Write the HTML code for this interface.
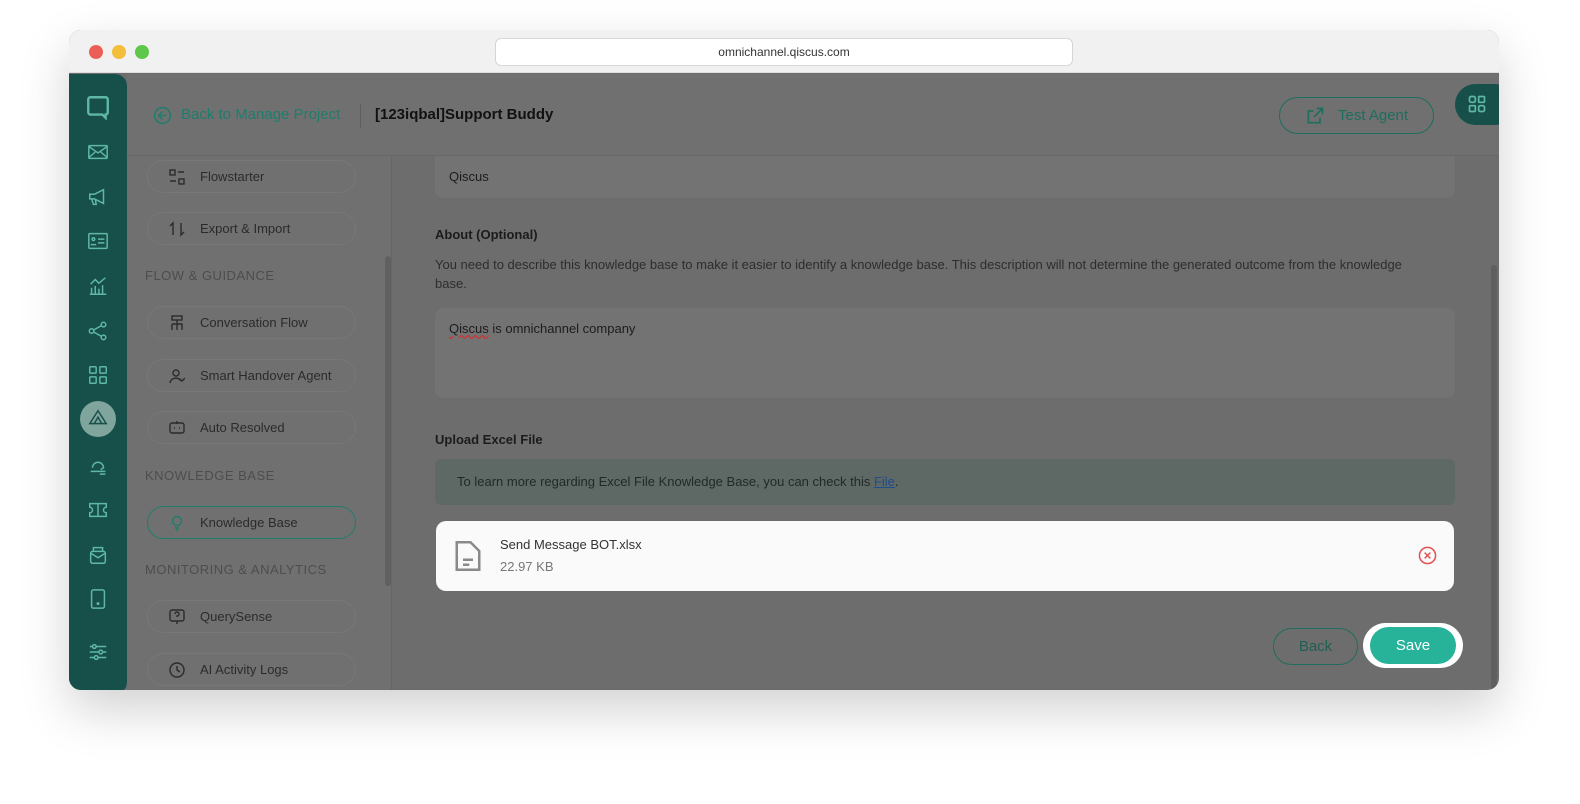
<!DOCTYPE html>
<html><head><style>
*{box-sizing:border-box;margin:0;padding:0}
body{width:1580px;height:804px;background:#fff;font-family:"Liberation Sans",sans-serif;position:relative;overflow:hidden}
.win{position:absolute;left:69px;top:30px;width:1430px;height:660px;border-radius:12px;overflow:hidden;box-shadow:0 20px 50px rgba(0,0,0,.18);background:#6d6d6d}
.bar{position:absolute;left:0;top:0;width:100%;height:43px;background:#f1f1f1;border-bottom:1px solid #ddd}
.dot{position:absolute;top:15px;width:14px;height:14px;border-radius:50%}
.url{position:absolute;left:426px;top:8px;width:578px;height:28px;background:#fff;border:1px solid #d6d6d6;border-radius:6px;font-size:12px;color:#333;text-align:center;line-height:27px}
.a{position:absolute}
.rail{left:0;top:44px;width:58px;height:620px;background:#17504a;border-radius:0 12px 12px 0}
.ri{position:absolute;left:18px;width:22px;height:22px;stroke:#5fb8a5;fill:none;stroke-width:1.6}
.hdr{left:58px;top:44px;width:1372px;height:82px;background:#707070;border-bottom:1px solid #666}
.lp{left:58px;top:126px;width:265px;height:540px;background:#707070;border-right:1px solid #666}
.pill{position:absolute;left:20px;width:209px;height:33px;border:1px solid #777;border-radius:17px;font-size:13px;color:#2b2b2b;line-height:31px;padding-left:52px}
.pill svg{position:absolute;left:21px;top:8px;width:16px;height:16px;stroke:#2b2b2b;fill:none;stroke-width:1.4}
.sec{position:absolute;left:18px;font-size:13px;color:#4d4d4d;letter-spacing:.5px}
.t{font-size:13px;color:#1c1c1c}
</style></head><body>
<div class="win">
<div class="bar">
<div class="dot" style="left:20px;background:#ec5f57"></div>
<div class="dot" style="left:43px;background:#f4bd3a"></div>
<div class="dot" style="left:66px;background:#5dc84a"></div>
<div class="url">omnichannel.qiscus.com</div>
</div>
<div class="a rail">
<svg class="ri" style="top:20px;width:26px;height:26px;left:16px" viewBox="0 0 24 24"><path d="M5 3h14a2 2 0 0 1 2 2v12a2 2 0 0 1-2 2h0v3l-3-3H5a2 2 0 0 1-2-2V5a2 2 0 0 1 2-2z" stroke-width="2.2"/></svg>
<svg class="ri" style="top:67px" viewBox="0 0 24 24"><rect x="2" y="5" width="20" height="14" rx="1"/><path d="M2 6l10 7 10-7M2 18l7-6M22 18l-7-6"/></svg>
<svg class="ri" style="top:112px" viewBox="0 0 24 24"><path d="M3 9h5l10-5v15L8 14H3zM5 14l2 6h3l-1-6"/></svg>
<svg class="ri" style="top:156px" viewBox="0 0 24 24"><rect x="2" y="4" width="20" height="16" rx="1"/><circle cx="7" cy="10" r="1.5"/><path d="M4 16h6M12 10h7M12 14h7"/></svg>
<svg class="ri" style="top:201px" viewBox="0 0 24 24"><path d="M3 21h18M5 21v-7M9 21v-9M13 21v-6M17 21v-10M4 10l5-5 4 4 7-6"/></svg>
<svg class="ri" style="top:246px" viewBox="0 0 24 24"><circle cx="5" cy="12" r="2.5"/><circle cx="18" cy="5" r="2.5"/><circle cx="18" cy="19" r="2.5"/><path d="M7 11l9-5M7 13l9 5"/></svg>
<svg class="ri" style="top:290px" viewBox="0 0 24 24"><rect x="3" y="3" width="7" height="7" rx="1"/><rect x="14" y="3" width="7" height="7" rx="1"/><rect x="3" y="14" width="7" height="7" rx="1"/><rect x="14" y="14" width="7" height="7" rx="1"/></svg>
<div style="position:absolute;left:11px;top:327px;width:36px;height:36px;border-radius:50%;background:#7fa59c"></div>
<svg class="ri" style="top:334px;stroke:#17504a" viewBox="0 0 24 24"><path d="M12 3l9 14H3zM8 17l4-7 4 7"/></svg>
<svg class="ri" style="top:380px" viewBox="0 0 24 24"><path d="M6 15a6 6 0 1 1 12 0l-3 2M4 19h16M14 22h6"/></svg>
<svg class="ri" style="top:425px" viewBox="0 0 24 24"><path d="M3 5h18v4a3 3 0 0 0 0 6v4H3v-4a3 3 0 0 0 0-6zM12 5v14"/></svg>
<svg class="ri" style="top:470px" viewBox="0 0 24 24"><rect x="4" y="8" width="16" height="13" rx="2"/><path d="M4 10l8 5 8-5M7 8V4h10v4"/></svg>
<svg class="ri" style="top:514px" viewBox="0 0 24 24"><rect x="5" y="2" width="14" height="20" rx="2"/><circle cx="12" cy="17" r=".8"/></svg>
<svg class="ri" style="top:567px" viewBox="0 0 24 24"><path d="M3 6h18M3 12h18M3 18h18"/><circle cx="8" cy="6" r="2" fill="#17504a"/><circle cx="15" cy="12" r="2" fill="#17504a"/><circle cx="10" cy="18" r="2" fill="#17504a"/></svg>
</div>
<div class="a hdr">
<svg style="position:absolute;left:26px;top:32px;width:19px;height:19px" viewBox="0 0 24 24" fill="none" stroke="#1f7d6c" stroke-width="2"><circle cx="12" cy="12" r="10"/><path d="M12 7l-5 5 5 5M7 12h10"/></svg>
<div style="position:absolute;left:54px;top:32px;font-size:15px;color:#1f7d6c">Back to Manage Project</div>
<div style="position:absolute;left:233px;top:30px;width:1px;height:24px;background:#5f5f5f"></div>
<div style="position:absolute;left:248px;top:32px;font-size:15px;color:#111;font-weight:bold">[123iqbal]Support Buddy</div>
<div style="position:absolute;left:1152px;top:23px;width:155px;height:37px;border:1px solid #1f6d5f;border-radius:19px;color:#1f6d5f;font-size:15px;line-height:35px;padding-left:58px">Test Agent
<svg style="position:absolute;left:25px;top:8px;width:20px;height:20px" viewBox="0 0 24 24" fill="none" stroke="#1f6d5f" stroke-width="2"><path d="M18 14v6H4V6h6M14 3h7v7M21 3L11 13"/></svg></div>
<div style="position:absolute;left:1328px;top:10px;width:60px;height:41px;background:#17504a;border-radius:21px"><svg style="position:absolute;left:12px;top:10px;width:20px;height:20px" viewBox="0 0 24 24" fill="none" stroke="#5fb8a5" stroke-width="2"><rect x="3" y="3" width="7" height="7" rx="2"/><rect x="14" y="3" width="7" height="7" rx="1"/><rect x="3" y="14" width="7" height="7" rx="1"/><rect x="14" y="14" width="7" height="7" rx="2"/></svg></div>
</div>
<div class="a lp">
<div class="pill" style="top:4px"><svg viewBox="0 0 16 16"><rect x="1" y="1" width="5" height="5"/><rect x="10" y="10" width="5" height="5"/><path d="M9 3h6M1 12h6"/></svg>Flowstarter</div>
<div class="pill" style="top:56px"><svg viewBox="0 0 16 16"><path d="M4 14V2L1 5M12 2v12l3-3"/></svg>Export &amp; Import</div>
<div class="sec" style="top:112px">FLOW &amp; GUIDANCE</div>
<div class="pill" style="top:150px"><svg viewBox="0 0 16 16"><rect x="3" y="1" width="10" height="4"/><path d="M8 5v4M3 9h10v6M3 9v6M8 9v6"/></svg>Conversation Flow</div>
<div class="pill" style="top:203px"><svg viewBox="0 0 16 16"><circle cx="7" cy="5" r="3"/><path d="M1 15a6 6 0 0 1 11-2M11 11l2 2 3-3"/></svg>Smart Handover Agent</div>
<div class="pill" style="top:255px"><svg viewBox="0 0 16 16"><rect x="1" y="3" width="14" height="10" rx="2"/><path d="M5 8h1M10 8h1M8 1v3"/></svg>Auto Resolved</div>
<div class="sec" style="top:312px">KNOWLEDGE BASE</div>
<div class="pill" style="top:350px;border-color:#1f7d6c"><svg viewBox="0 0 16 16" style="stroke:#1f7d6c"><circle cx="8" cy="6" r="4.5"/><path d="M6 13h4M7 15h2"/></svg>Knowledge Base</div>
<div class="sec" style="top:406px">MONITORING &amp; ANALYTICS</div>
<div class="pill" style="top:444px"><svg viewBox="0 0 16 16"><rect x="1" y="1" width="14" height="11" rx="2"/><path d="M8 12v3M6 5a2 2 0 1 1 2 2v1"/></svg>QuerySense</div>
<div class="pill" style="top:497px"><svg viewBox="0 0 16 16"><circle cx="8" cy="8" r="7"/><path d="M8 4v4l3 2"/></svg>AI Activity Logs</div>
<div style="position:absolute;left:258px;top:100px;width:6px;height:330px;background:#606060;border-radius:3px"></div>
</div>
<div class="a" style="left:366px;top:126px;width:1020px;height:42px;background:#737373;border-radius:0 0 8px 8px"><span class="t" style="position:absolute;left:14px;top:13px">Qiscus</span></div>
<div class="a t" style="left:366px;top:197px;font-weight:bold">About (Optional)</div>
<div class="a" style="left:366px;top:225px;width:1000px;font-size:13px;color:#2d2d2d;line-height:19px">You need to describe this knowledge base to make it easier to identify a knowledge base. This description will not determine the generated outcome from the knowledge base.</div>
<div class="a" style="left:366px;top:278px;width:1020px;height:90px;background:#737373;border-radius:8px"><span class="t" style="position:absolute;left:14px;top:13px"><span style="text-decoration:underline wavy #c33">Qiscus</span> is omnichannel company</span></div>
<div class="a t" style="left:366px;top:402px;font-weight:bold">Upload Excel File</div>
<div class="a" style="left:366px;top:429px;width:1020px;height:46px;background:#5e6865;border-radius:6px;font-size:13px;color:#1f2a27;line-height:46px;padding-left:22px">To learn more regarding Excel File Knowledge Base, you can check this <span style="color:#1f4c8a;text-decoration:underline">File</span>.</div>
<div class="a" style="left:367px;top:491px;width:1018px;height:70px;background:#fafafa;border-radius:10px">
<svg style="position:absolute;left:17px;top:17px;width:30px;height:36px" viewBox="0 0 24 28" fill="none" stroke="#8a8a8a" stroke-width="2"><path d="M3 3h11l7 7v15H3z"/><path d="M8 17h8M8 21h5"/></svg>
<div style="position:absolute;left:64px;top:16px;font-size:13px;color:#333">Send Message BOT.xlsx</div>
<div style="position:absolute;left:64px;top:38px;font-size:13px;color:#777">22.97 KB</div>
<svg style="position:absolute;left:982px;top:25px;width:19px;height:19px" viewBox="0 0 20 20" fill="none" stroke="#e45252" stroke-width="1.6"><circle cx="10" cy="10" r="8.5"/><path d="M7 7l6 6M13 7l-6 6"/></svg>
</div>
<div class="a" style="left:1204px;top:598px;width:85px;height:37px;border:1px solid #1f6d5f;border-radius:19px;color:#1f5f53;font-size:15px;text-align:center;line-height:35px">Back</div>
<div class="a" style="left:1294px;top:593px;width:100px;height:45px;background:#fff;border-radius:23px"></div>
<div class="a" style="left:1301px;top:597px;width:86px;height:37px;background:#26b39a;border-radius:19px;color:#fff;font-size:15px;text-align:center;line-height:37px">Save</div>
<div class="a" style="left:1422px;top:235px;width:6px;height:425px;background:#5f5f5f;border-radius:3px"></div>
</div>
</body></html>
